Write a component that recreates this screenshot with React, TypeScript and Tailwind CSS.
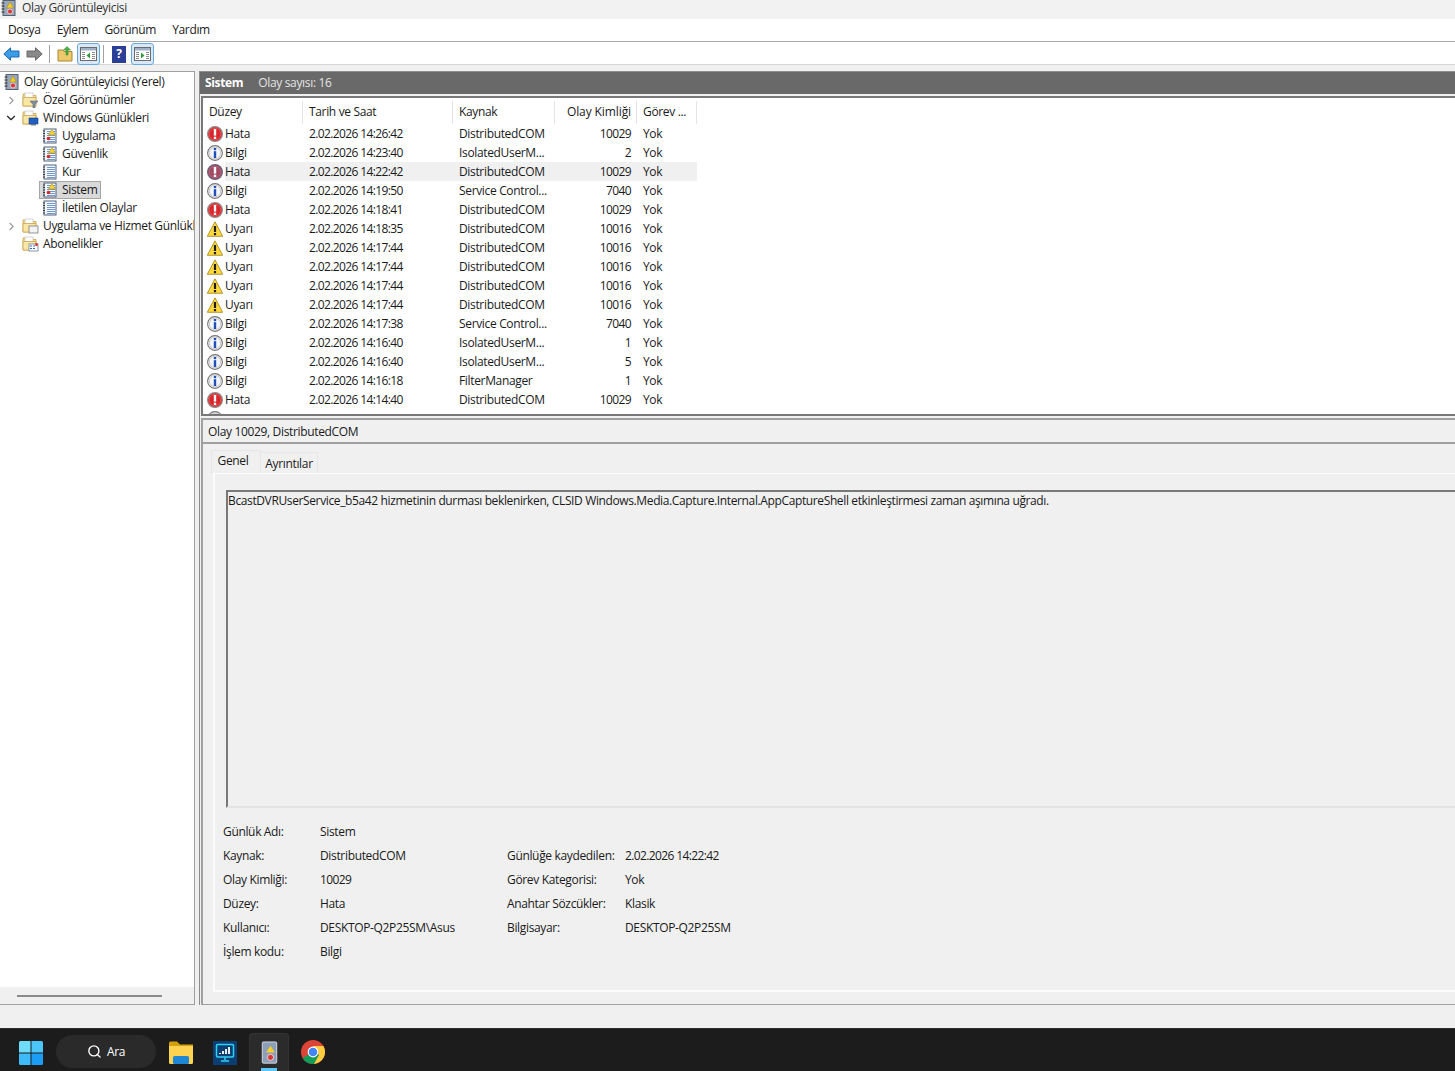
import { ChevronDown, ChevronRight, Search } from "lucide-react";

type Level = "Hata" | "Bilgi" | "Uyarı";

const events: { level: Level; date: string; source: string; id: string }[] = [
  { level: "Hata", date: "2.02.2026 14:26:42", source: "DistributedCOM", id: "10029" },
  { level: "Bilgi", date: "2.02.2026 14:23:40", source: "IsolatedUserM...", id: "2" },
  { level: "Hata", date: "2.02.2026 14:22:42", source: "DistributedCOM", id: "10029" },
  { level: "Bilgi", date: "2.02.2026 14:19:50", source: "Service Control...", id: "7040" },
  { level: "Hata", date: "2.02.2026 14:18:41", source: "DistributedCOM", id: "10029" },
  { level: "Uyarı", date: "2.02.2026 14:18:35", source: "DistributedCOM", id: "10016" },
  { level: "Uyarı", date: "2.02.2026 14:17:44", source: "DistributedCOM", id: "10016" },
  { level: "Uyarı", date: "2.02.2026 14:17:44", source: "DistributedCOM", id: "10016" },
  { level: "Uyarı", date: "2.02.2026 14:17:44", source: "DistributedCOM", id: "10016" },
  { level: "Uyarı", date: "2.02.2026 14:17:44", source: "DistributedCOM", id: "10016" },
  { level: "Bilgi", date: "2.02.2026 14:17:38", source: "Service Control...", id: "7040" },
  { level: "Bilgi", date: "2.02.2026 14:16:40", source: "IsolatedUserM...", id: "1" },
  { level: "Bilgi", date: "2.02.2026 14:16:40", source: "IsolatedUserM...", id: "5" },
  { level: "Bilgi", date: "2.02.2026 14:16:18", source: "FilterManager", id: "1" },
  { level: "Hata", date: "2.02.2026 14:14:40", source: "DistributedCOM", id: "10029" },
];

function LevelIcon({ level, muted }: { level: Level; muted?: boolean }) {
  if (level === "Uyarı") {
    return (
      <svg width="16" height="16" viewBox="0 0 16 16" className="shrink-0">
        <path d="M8 .8 15.700 15.300H.3Z" fill="#ffd93b" stroke="#9c8216" strokeWidth="0.8" />
        <rect x="6.900" y="5" width="2.200" height="6" fill="#1c1c1c" />
        <rect x="6.900" y="12" width="2.200" height="2.200" fill="#1c1c1c" />
      </svg>
    );
  }
  if (level === "Bilgi") {
    return (
      <svg width="16" height="16" viewBox="0 0 16 16" className="shrink-0">
        <circle cx="8" cy="8" r="7.400" fill="#f6f6f6" stroke="#757575" strokeWidth="1.100" />
        <circle cx="8" cy="8" r="5.700" fill="#f4f6fb" stroke="#c4c4c4" strokeWidth="0.900" />
        <rect x="6.800" y="3" width="2.400" height="2.200" fill="#1f4fb8" />
        <rect x="6.800" y="6.200" width="2.400" height="6.800" fill="#1f4fb8" />
      </svg>
    );
  }
  return (
    <svg width="16" height="16" viewBox="0 0 16 16" className="shrink-0">
      <circle cx="8" cy="8" r="7.400" fill={muted ? "#a44a63" : "#d8262c"} stroke={muted ? "#6b6680" : "#8e8e8e"} strokeWidth="1.200" />
      <circle cx="8" cy="8" r="5.800" fill="none" stroke={muted ? "#b76a80" : "#ee5b58"} strokeWidth="0.700" />
      <rect x="6.800" y="3" width="2.400" height="6.600" fill="#fff" />
      <rect x="6.800" y="10.700" width="2.400" height="2.300" fill="#fff" />
    </svg>
  );
}

function LogIcon({ badge = true }: { badge?: boolean }) {
  return (
    <svg width="16" height="16" viewBox="0 0 16 16" className="shrink-0">
      <rect x="2" y="1" width="12" height="14" fill="#f4f6fb" stroke="#4f627e" />
      <path d="M1 3h2M1 5.500h2M1 8h2M1 10.500h2M1 13h2" stroke="#3d3d3d" />
      <path d="M5 3.500h8M5 5.500h8M5 7.500h8M5 9.500h8M5 11.500h8M5 13.500h8" stroke="#6f99cc" />
      {badge && <path d="M10 1.500 13.500 7h-7Z" fill="#f5d02e" stroke="#b09110" strokeWidth="0.5" />}
      {badge && <circle cx="6.500" cy="10.500" r="1.800" fill="#d92a2a" />}
    </svg>
  );
}

function RootIcon() {
  return (
    <svg width="16" height="16" viewBox="0 0 16 16" className="shrink-0">
      <rect x="2" y="0.500" width="12" height="15" fill="#9aa8bd" stroke="#56616f" />
      <path d="M0.500 3h3M0.500 6h3M0.500 9h3M0.500 12h3" stroke="#333" />
      <path d="M9 2 12.500 8h-7Z" fill="#f3cf2d" stroke="#9b8210" strokeWidth="0.5" />
      <circle cx="9" cy="11.500" r="2.500" fill="#d93a3a" stroke="#fff" strokeWidth="0.6" />
    </svg>
  );
}

function FolderIcon({ kind }: { kind: "filter" | "windows" | "app" | "subs" }) {
  return (
    <svg width="17" height="16" viewBox="0 0 17 16" className="shrink-0">
      <path d="M1 2h5l1 1.500h7V14H1Z" fill="#f7dc8d" stroke="#c9a550" strokeWidth="0.8" />
      <rect x="3" y="1" width="8" height="5" fill="#fff" stroke="#b8b8b8" strokeWidth="0.6" />
      <path d="M1 5.500h13V14H1Z" fill="#fbe7a5" stroke="#c9a550" strokeWidth="0.8" />
      {kind === "filter" && <path d="M8 9h8l-3 3.500V16h-2v-3.500Z" fill="#7d8da3" stroke="#56616f" strokeWidth="0.5" />}
      {kind === "windows" && <rect x="7" y="8" width="9" height="6" fill="#1f5fc4" stroke="#193f7d" strokeWidth="0.6" />}
      {kind === "windows" && <rect x="9" y="14" width="5" height="1.500" fill="#6b7a8c" />}
      {kind === "app" && <rect x="7" y="8" width="9" height="7" fill="#f2f2f2" stroke="#7d7d7d" strokeWidth="0.8" />}
      {kind === "subs" && <rect x="7" y="8" width="9" height="7" fill="#fff" stroke="#6d7f99" strokeWidth="0.8" />}
      {kind === "subs" && <path d="M8 10h2M11 10h2M8 12.500h2M11 12.500h2" stroke="#2d67c2" />}
      {kind === "subs" && <circle cx="14.500" cy="8.500" r="1.500" fill="#d93a3a" />}
    </svg>
  );
}

function PaneButton({ side }: { side: "left" | "right" }) {
  return (
    <div className="flex h-[22px] w-[23px] items-center justify-center rounded-[3px] border border-[#6aa9dc] bg-[#d7e9f8]">
      <svg width="17" height="16" viewBox="0 0 17 16">
        <rect x="0.500" y="1.500" width="16" height="13" fill="#fff" stroke="#6b6b6b" />
        <rect x="1" y="2" width="15" height="2.500" fill="#9fb1c6" />
        <path d="M2 6.500h3M2 8.500h3M2 10.500h3M2 12.500h3M12 6.500h3M12 8.500h3M12 10.500h3M12 12.500h3" stroke="#8a8a8a" />
        {side === "left" ? <path d="M10 6.500v6l-3.500-3Z" fill="#2f9e3a" /> : <path d="M7 6.500v6l3.500-3Z" fill="#2f9e3a" />}
      </svg>
    </div>
  );
}

function Arrow({ dir, color, edge }: { dir: "left" | "right"; color: string; edge: string }) {
  return (
    <svg width="17" height="14" viewBox="0 0 17 14" className={dir === "right" ? "-scale-x-100" : ""}>
      <path d="M.8 7 7.500 .8V4H16v6H7.500v3.200Z" fill={color} stroke={edge} />
    </svg>
  );
}

function TreeRow({ indent, chevron, icon, label, selected }: { indent: string; chevron?: "right" | "down"; icon: React.ReactNode; label: string; selected?: boolean }) {
  return (
    <div className={`flex h-[18px] items-center whitespace-nowrap ${indent}`}>
      {chevron && (
        <span className="mr-[3px] flex w-[16px] shrink-0 justify-center text-[#555]">
          {chevron === "right" ? <ChevronRight size={13} className="text-[#9a9a9a]" /> : <ChevronDown size={14} className="text-[#222]" />}
        </span>
      )}
      {selected ? (
        <span className="flex h-[18px] items-center gap-[4px] border border-[#a6a6a6] bg-[#d9d9d9] pl-[2px] pr-[3px]">
          {icon}
          <span>{label}</span>
        </span>
      ) : (
        <span className="flex items-center gap-[4px]">
          {icon}
          <span>{label}</span>
        </span>
      )}
    </div>
  );
}

function Field({ label, value, labelWidth, tight }: { label: string; value: string; labelWidth: string; tight?: boolean }) {
  return (
    <div className="flex h-[24px] items-center whitespace-nowrap">
      <span className={labelWidth}>{label}</span>
      <span className={tight ? "tracking-[-0.62px]" : ""}>{value}</span>
    </div>
  );
}

export default function App() {
  return (
    <div className="flex h-[1071px] w-[1455px] flex-col overflow-hidden bg-[#f0f0f0] text-[12px] leading-[16px] tracking-[-0.34px] text-[#1a1a1a] [font-family:'Open_Sans','Noto_Sans',sans-serif]">
      <div className="flex h-[19px] shrink-0 items-center gap-[5px] bg-[#f2f2f2] pb-[3px] pl-[1px]">
        <RootIcon />
        <span className="text-[#333]">Olay Görüntüleyicisi</span>
      </div>
      <div className="flex h-[23px] shrink-0 items-center gap-[16px] border-b border-[#a9a9a9] bg-white pb-[1px] pl-[8px]">
        <span>Dosya</span>
        <span>Eylem</span>
        <span>Görünüm</span>
        <span>Yardım</span>
      </div>
      <div className="flex h-[23px] shrink-0 items-center border-b border-[#d6d6d6] bg-white pt-[2px] pl-[3px]">
        <Arrow dir="left" color="#3d9ce8" edge="#1d69b4" />
        <span className="w-[6px]" />
        <Arrow dir="right" color="#8a8a8a" edge="#666" />
        <span className="mx-[6px] h-[18px] w-px bg-[#a0a0a0]" />
        <span className="w-[1px]" />
        <svg width="17" height="16" viewBox="0 0 17 16">
          <path d="M1 4h5l1 1.500h8V15H1Z" fill="#ecc96a" stroke="#a98630" />
          <path d="M9 9V4H6.500L10 .5 13.500 4H11v5Z" fill="#4fb04a" stroke="#2f7d2c" strokeWidth="0.5" />
        </svg>
        <span className="w-[3px]" />
        <PaneButton side="left" />
        <span className="mx-[3px] h-[18px] w-px bg-[#a0a0a0]" />
        <span className="mr-[2px] ml-[5px] flex h-[17px] w-[14px] items-center justify-center bg-[#2c3f96] text-[12px] font-bold text-white">?</span>
        <span className="w-[3px]" />
        <PaneButton side="right" />
      </div>
      <div className="h-[6px] shrink-0 bg-[#f0f0f0]" />

      <div className="flex h-[934px] shrink-0">
        <div className="flex w-[195px] shrink-0 flex-col overflow-hidden border-t border-r border-b border-[#a0a0a0] bg-white">
          <div className="flex-1 pt-[1px]">
            <TreeRow indent="pl-[4px]" icon={<RootIcon />} label="Olay Görüntüleyicisi (Yerel)" />
            <TreeRow indent="pl-[3px]" chevron="right" icon={<FolderIcon kind="filter" />} label="Özel Görünümler" />
            <TreeRow indent="pl-[3px]" chevron="down" icon={<FolderIcon kind="windows" />} label="Windows Günlükleri" />
            <TreeRow indent="pl-[42px]" icon={<LogIcon />} label="Uygulama" />
            <TreeRow indent="pl-[42px]" icon={<LogIcon />} label="Güvenlik" />
            <TreeRow indent="pl-[42px]" icon={<LogIcon badge={false} />} label="Kur" />
            <TreeRow indent="pl-[39px]" icon={<LogIcon />} label="Sistem" selected />
            <TreeRow indent="pl-[42px]" icon={<LogIcon badge={false} />} label="İletilen Olaylar" />
            <TreeRow indent="pl-[3px]" chevron="right" icon={<FolderIcon kind="app" />} label="Uygulama ve Hizmet Günlükleri" />
            <TreeRow indent="pl-[22px]" icon={<FolderIcon kind="subs" />} label="Abonelikler" />
          </div>
          <div className="flex h-[17px] shrink-0 items-center bg-[#f0f0f0] pl-[17px]">
            <div className="h-[2px] w-[145px] bg-[#8a8a8a]" />
          </div>
        </div>
        <div className="w-[4px] shrink-0 bg-[#f0f0f0]" />

        <div className="flex min-w-0 flex-1 flex-col border-l border-[#8c8c8c]">
          <div className="flex h-[23px] shrink-0 items-center gap-[15px] border-t border-[#8f8f8f] bg-[#696969] pl-[5px] text-white">
            <span className="font-bold">Sistem</span>
            <span className="text-[#e4e4e4]">Olay sayısı: 16</span>
          </div>
          <div className="h-[2px] shrink-0 bg-[#f0f0f0]" />
          <div className="ml-[1px] flex h-[320px] shrink-0 flex-col overflow-hidden border-t-[2px] border-b-[2px] border-l-[2px] border-[#787878] bg-white">
            <div className="flex h-[26px] shrink-0 items-center pt-[2px]">
              <div className="flex h-[23px] w-[100px] items-center border-r border-[#e5e5e5] pl-[6px]">Düzey</div>
              <div className="flex h-[23px] w-[150px] items-center border-r border-[#e5e5e5] pl-[6px]">Tarih ve Saat</div>
              <div className="flex h-[23px] w-[102px] items-center border-r border-[#e5e5e5] pl-[6px]">Kaynak</div>
              <div className="flex h-[23px] w-[82px] items-center justify-end border-r border-[#e5e5e5] pr-[5px] tracking-[-0.1px]">Olay Kimliği</div>
              <div className="flex h-[23px] w-[60px] items-center border-r border-[#e5e5e5] pl-[6px]">Görev ...</div>
            </div>
            {events.map((e, i) => (
              <div key={i} className="flex h-[19px] w-[494px] shrink-0 items-center whitespace-nowrap">
                <div className="flex w-[100px] items-center gap-[2px] pl-[4px]">
                  <LevelIcon level={e.level} muted={i === 2} />
                  <span className={i === 2 ? "flex-1 bg-[#f0f0f0] leading-[19px]" : ""}>{e.level}</span>
                </div>
                <div className={`flex h-[19px] flex-1 items-center ${i === 2 ? "bg-[#f0f0f0]" : ""}`}>
                  <div className="w-[150px] pl-[6px] tracking-[-0.62px]">{e.date}</div>
                  <div className="w-[102px] pl-[6px]">{e.source}</div>
                  <div className="w-[82px] pr-[6px] text-right tracking-[-0.62px]">{e.id}</div>
                  <div className="w-[60px] pl-[6px]">Yok</div>
                </div>
              </div>
            ))}
            {/* next row is only peeking out under the fold */}
            <div className="flex h-[19px] shrink-0 items-center pl-[4px]">
              <LevelIcon level="Bilgi" />
            </div>
          </div>
          <div className="h-[2px] shrink-0 bg-[#f0f0f0]" />

          <div className="ml-[1px] flex min-h-0 flex-1 flex-col border-t-[2px] border-b border-l-[2px] border-[#a0a0a0]">
            <div className="flex h-[24px] shrink-0 items-center border-b-[2px] border-[#a0a0a0] pt-[2px] pl-[5px]">Olay 10029, DistributedCOM</div>
            <div className="flex h-[29px] shrink-0 items-end pl-[8px]">
              <div className="flex h-[23px] w-[50px] items-center justify-center border-t border-r border-l border-[#e6e6e6] bg-[#f0f0f0] pr-[6px] pb-[3px]">Genel</div>
              <div className="flex h-[21px] w-[57px] items-center justify-center border-t border-r border-[#e6e6e6] bg-[#f0f0f0] pt-[1px]">Ayrıntılar</div>
            </div>
            <div className="mb-[12px] ml-[10px] flex flex-1 flex-col border-t border-b-[2px] border-l-[2px] border-[#fbfbfb] bg-[#f0f0f0] pt-[16px] pl-[11px]">
              <div className="h-[318px] shrink-0 border-t-[2px] border-b-[2px] border-l-[2px] border-t-[#787878] border-b-[#e4e4e4] border-l-[#787878] pt-[1px] tracking-[-0.375px]">
                BcastDVRUserService_b5a42 hizmetinin durması beklenirken, CLSID Windows.Media.Capture.Internal.AppCaptureShell etkinleştirmesi zaman aşımına uğradı.
              </div>
              <div className="mt-[12px] -ml-[3px] flex">
                <div className="w-[284px] shrink-0">
                  <Field label="Günlük Adı:" value="Sistem" labelWidth="w-[97px]" />
                  <Field label="Kaynak:" value="DistributedCOM" labelWidth="w-[97px]" />
                  <Field label="Olay Kimliği:" value="10029" labelWidth="w-[97px]" tight />
                  <Field label="Düzey:" value="Hata" labelWidth="w-[97px]" />
                  <Field label="Kullanıcı:" value="DESKTOP-Q2P25SM\Asus" labelWidth="w-[97px]" />
                  <Field label="İşlem kodu:" value="Bilgi" labelWidth="w-[97px]" />
                </div>
                <div className="pt-[24px]">
                  <Field label="Günlüğe kaydedilen:" value="2.02.2026 14:22:42" labelWidth="w-[118px]" tight />
                  <Field label="Görev Kategorisi:" value="Yok" labelWidth="w-[118px]" />
                  <Field label="Anahtar Sözcükler:" value="Klasik" labelWidth="w-[118px]" />
                  <Field label="Bilgisayar:" value="DESKTOP-Q2P25SM" labelWidth="w-[118px]" />
                </div>
              </div>
            </div>
          </div>
        </div>
      </div>

      <div className="flex-1 bg-[#f0f0f0]" />

      <div className="flex h-[43px] shrink-0 items-start border-t border-[#2e2e2e] bg-[#1c1c1c] pl-[19px] text-white">
        <svg width="24" height="24" viewBox="0 0 24 24" className="mt-[12px] shrink-0">
          <path d="M0 1.500A1.500 1.500 0 0 1 1.500 0H11.500V11.500H0Z" fill="#6fdcfb" />
          <path d="M12.500 0H22.500A1.500 1.500 0 0 1 24 1.500V11.500H12.500Z" fill="#4cc6f8" />
          <path d="M0 12.500H11.500V24H1.500A1.500 1.500 0 0 1 0 22.500Z" fill="#3dbaf7" />
          <path d="M12.500 12.500H24V22.500A1.500 1.500 0 0 1 22.500 24H12.500Z" fill="#1c9df5" />
        </svg>
        <div className="mt-[6px] ml-[13px] flex h-[33px] w-[100px] shrink-0 items-center justify-center gap-[5px] rounded-full bg-[#2a2a2a]">
          <Search size={15} strokeWidth={2.2} className="text-white" />
          <span className="font-medium">Ara</span>
        </div>
        <svg width="24" height="23" viewBox="0 0 24 23" className="mt-[12px] ml-[13px] shrink-0">
          <path d="M0 2a1.500 1.500 0 0 1 1.500-1.500H8l3 3h13V8H0Z" fill="#d59f0b" />
          <path d="M0 5h24v16.500a1.500 1.500 0 0 1-1.500 1.500h-21A1.500 1.500 0 0 1 0 21.500Z" fill="#fbd350" />
          <rect x="4" y="15" width="16" height="8" rx="1.500" fill="#1d87d6" />
        </svg>
        <div className="ml-[20px] flex w-[24px] shrink-0 flex-col items-center">
          <svg width="24" height="24" viewBox="0 0 24 24" className="mt-[12px]">
            <rect width="24" height="24" fill="#0b3f73" />
            <rect x="3.500" y="3.500" width="17" height="12.500" rx="1" fill="none" stroke="#2fd0f5" strokeWidth="1.500" />
            <path d="M7 12v1M10 10v3M13 8v5M16 6v7" stroke="#fff" strokeWidth="1.800" />
            <path d="M12 16v3M8 20h8" stroke="#2fd0f5" strokeWidth="1.500" />
          </svg>
          <span className="mt-[6px] h-[3px] w-[6px] rounded-t-sm bg-[#9a9a9a]" />
        </div>
        <div className="mt-[4px] ml-[12px] flex h-[38px] w-[40px] shrink-0 flex-col items-center rounded-t-[4px] border-t border-r border-l border-[#333] bg-[#2b2b2b]">
          <svg width="17" height="24" viewBox="0 0 17 24" className="mt-[7px]">
            <rect x="1" y="1" width="15" height="22" rx="1" fill="#8d9fb8" stroke="#d5dbe4" />
            <path d="M9.500 5 14 12H5Z" fill="#f5d02e" />
            <circle cx="9.500" cy="17" r="3.200" fill="#d83a3a" stroke="#fff" strokeWidth="0.700" />
          </svg>
          <span className="mt-[4px] h-[3px] w-[16px] bg-[#5cc8fa]" />
        </div>
        <div className="ml-[12px] flex w-[24px] shrink-0 flex-col items-center">
          <svg width="24" height="24" viewBox="0 0 24 24" className="mt-[11px]">
            <circle cx="12" cy="12" r="12" fill="#db4437" />
            <path d="M12 12 1.600 18A12 12 0 0 0 12 24c.4 0 .8 0 1.200-.1l5-8.900Z" fill="#0f9d58" />
            <path d="M12 6h10.400A12 12 0 0 1 13 24l5-9Z" fill="#ffcd40" />
            <circle cx="12" cy="12" r="5.400" fill="#fff" />
            <circle cx="12" cy="12" r="4.300" fill="#4285f4" />
          </svg>
          <span className="mt-[7px] h-[3px] w-[6px] rounded-t-sm bg-[#9a9a9a]" />
        </div>
      </div>
    </div>
  );
}
